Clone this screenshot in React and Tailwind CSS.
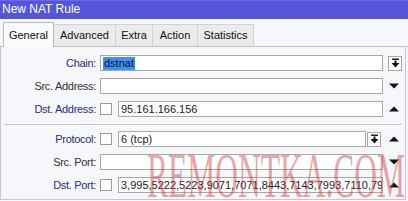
const tabs = [
  { name: 'General', w: 'w-[51px]', active: true },
  { name: 'Advanced', w: 'w-[62px]' },
  { name: 'Extra', w: 'w-[37px]' },
  { name: 'Action', w: 'w-[45px]' },
  { name: 'Statistics', w: 'w-[56px]' },
]

const DropIcon = () => (
  <svg width="9" height="10" viewBox="0 0 9 10">
    <rect x="1" y="0.5" width="7" height="1.4" fill="#111" />
    <rect x="3.5" y="2.5" width="2" height="3" fill="#111" />
    <polygon points="0.5,5 8.5,5 4.5,9.5" fill="#111" />
  </svg>
)

const Down = () => (
  <svg width="10" height="6" viewBox="0 0 10 6">
    <polygon points="0,0.5 10,0.5 5,5.5" fill="#111" />
  </svg>
)

const Up = () => (
  <svg width="10" height="6" viewBox="0 0 10 6">
    <polygon points="0,5.5 10,5.5 5,0.5" fill="#111" />
  </svg>
)

const Row = ({ label, accent, check, value, selected, button, trail }) => (
  <div className="flex items-center h-[16px]">
    <div
      className={`w-[95px] shrink-0 text-right whitespace-nowrap tracking-[-0.3px] ${
        accent ? 'text-[#2c2c86]' : 'text-[#333]'
      }`}
    >
      {label}:
    </div>
    <div className="w-[4px] shrink-0" />
    {check && (
      <div className="w-[12px] h-[12px] shrink-0 mr-[6px] border border-[#9a9a9a] bg-white" />
    )}
    <div className="flex-1 min-w-0 h-[16px] border border-[#a8a8a8] bg-white pl-[2px] flex items-center overflow-hidden whitespace-nowrap text-[#222]">
      {selected ? (
        <span className="bg-[#3d93ee] text-[#0b0b48] leading-[13px] px-px">{value}</span>
      ) : (
        value
      )}
    </div>
    {button === 'inline' && (
      <div className="ml-px mr-[2px] w-[14px] h-[15px] shrink-0 border border-[#a8a8a8] bg-white flex items-center justify-center">
        <DropIcon />
      </div>
    )}
    <div className="w-[22px] h-[16px] shrink-0 flex items-center justify-center">
      {trail === 'drop' && (
        <div className="ml-[2px] w-[14px] h-[15px] border border-[#a8a8a8] bg-white flex items-center justify-center">
          <DropIcon />
        </div>
      )}
      {trail === 'down' && <Down />}
      {trail === 'up' && <Up />}
    </div>
  </div>
)

export default function App() {
  return (
    <div className="relative w-[408px] h-[201px] overflow-hidden bg-[#f6f7fa] font-['Liberation_Sans',Arial,sans-serif] text-[11px]">
      <div className="h-[19px] bg-[#5555d9] border-t border-[#6a6ae2] text-white text-[12px] pl-[2px] leading-[17px]">
        New NAT Rule
      </div>

      <div className="h-[28px] flex items-end pl-[3px] border-b border-[#c2c2c2]">
        {tabs.map((t) =>
          t.active ? (
            <div
              key={t.name}
              className={`${t.w} h-[25px] -mb-px relative z-10 bg-[#f9fafc] border border-b-0 border-[#bdbdbd] flex items-center justify-center text-[#111]`}
            >
              {t.name}
            </div>
          ) : (
            <div
              key={t.name}
              className={`${t.w} h-[22px] bg-[#ebebeb] border border-b-0 border-l-0 border-[#d2d2d2] flex items-center justify-center text-[#111]`}
            >
              {t.name}
            </div>
          )
        )}
      </div>

      <div className="w-[406px] h-[153px] border-l border-r border-b border-[#c8c8c8] pt-[8px] flex flex-col">
        <div className="flex flex-col gap-[7px]">
          <Row label="Chain" accent value="dstnat" selected trail="drop" />
          <Row label="Src. Address" value="" trail="down" />
          <Row label="Dst. Address" accent check value="95.161.166.156" trail="up" />
        </div>
        <div className="mx-[3px] mt-[7px] h-px bg-[#c6c6c6]" />
        <div className="mx-[3px] h-px bg-white" />
        <div className="mt-[5px] flex flex-col gap-[7px]">
          <Row label="Protocol" accent check value="6 (tcp)" button="inline" trail="up" />
          <Row label="Src. Port" value="" trail="down" />
          <Row
            label="Dst. Port"
            accent
            check
            value="3,995,5222,5223,9071,7071,8443,7143,7993,7110,7995"
            trail="up"
          />
        </div>
      </div>

      {/* watermark */}
      <svg
        className="absolute left-[146px] top-[150px] pointer-events-none"
        width="260"
        height="51"
        viewBox="0 0 260 51"
      >
        <text
          x="1"
          y="47"
          fontFamily="'Liberation Serif', serif"
          fontSize="64"
          textLength="258"
          lengthAdjust="spacingAndGlyphs"
          fill="rgba(200,55,55,0.45)"
        >
          REMONTKA.COM
        </text>
      </svg>
    </div>
  )
}
